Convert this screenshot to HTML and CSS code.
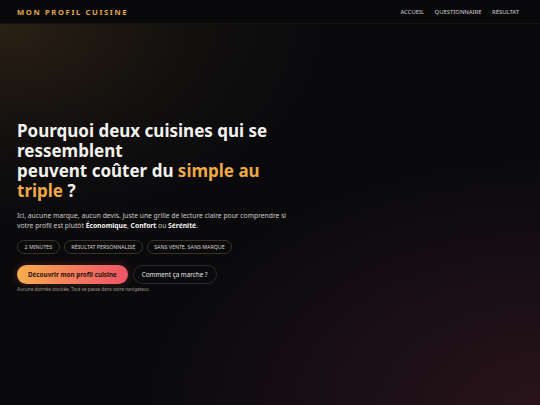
FILE: index.html
```html
<!DOCTYPE html>
<html lang="fr">
<head>
<meta charset="utf-8">
<title>Mon profil cuisine</title>
<link rel="stylesheet" href="styles.css">
</head>
<body>
<header class="topbar">
  <div class="brand">MON PROFIL CUISINE</div>
  <nav class="nav">
    <a href="#">ACCUEIL</a>
    <a href="#">QUESTIONNAIRE</a>
    <a href="#">RÉSULTAT</a>
  </nav>
</header>
<main class="hero">
  <div class="hero-inner">
    <h1 class="title">Pourquoi deux cuisines qui se ressemblent<br>peuvent coûter du <span class="accent">simple au triple</span> ?</h1>
    <p class="lead">Ici, aucune marque, aucun devis. Juste une grille de lecture claire pour comprendre si votre profil est plutôt <strong>Économique</strong>, <strong>Confort</strong> ou <strong>Sérénité</strong>.</p>
    <ul class="pills">
      <li class="pill">2 MINUTES</li>
      <li class="pill">RÉSULTAT PERSONNALISÉ</li>
      <li class="pill">SANS VENTE, SANS MARQUE</li>
    </ul>
    <div class="actions">
      <a class="btn btn-primary" href="#">Découvrir mon profil cuisine</a>
      <a class="btn btn-ghost" href="#">Comment ça marche ?</a>
    </div>
    <p class="note">Aucune donnée stockée. Tout se passe dans votre navigateur.</p>
  </div>
</main>
</body>
</html>
```
FILE: styles.css
```css
* { box-sizing: border-box; }
html, body { margin: 0; padding: 0; height: 100%; }
body {
  font-family: "Noto Sans", "Open Sans", sans-serif;
  background: #09090c;
  color: #f2f0ec;
  display: flex;
  flex-direction: column;
  min-height: 405px;
}
.topbar {
  height: 24px;
  flex: none;
  display: flex;
  align-items: center;
  justify-content: space-between;
  padding: 0 21px 0 17px;
  background: #08080b;
  border-bottom: 1px solid #15130f;
}
.brand {
  font-size: 7.6px;
  font-weight: 700;
  letter-spacing: 1.65px;
  color: #e2a94c;
}
.nav { display: flex; gap: 10.5px; }
.nav a {
  color: #d4d2d0;
  text-decoration: none;
  font-size: 5.9px;
}
.hero {
  flex: 1;
  display: flex;
  align-items: center;
  padding: 0 17px 16px;
  background:
    radial-gradient(ellipse 75% 65% at 0% 0%, rgba(48,36,22,0.85) 0%, rgba(30,24,16,0.45) 45%, rgba(0,0,0,0) 80%),
    radial-gradient(ellipse 85% 75% at 100% 100%, rgba(44,20,28,0.9) 0%, rgba(32,17,24,0.65) 45%, rgba(0,0,0,0) 85%),
    #0a0a0d;
}
.hero-inner { width: 290px; }
.title {
  margin: 0 0 10px;
  font-size: 17px;
  line-height: 20px;
  font-weight: 700;
  color: #f3f1ee;
  max-width: 262px;
}
.accent { color: #efa947; }
.lead {
  margin: 0 0 9px;
  font-size: 6.75px;
  line-height: 10px;
  color: #cfcbc6;
  max-width: 274px;
}
.lead strong { color: #f6f4f0; font-weight: 700; }
.pills {
  list-style: none;
  margin: 0 0 11px;
  padding: 0;
  display: flex;
  gap: 4px;
}
.pill {
  height: 14px;
  padding: 0 6.5px;
  display: flex;
  align-items: center;
  border: 1px solid #3d3324;
  border-radius: 7px;
  font-size: 5.3px;
  color: #d8d3cc;
}
.actions { display: flex; gap: 5px; align-items: center; }
.btn {
  height: 19px;
  display: flex;
  align-items: center;
  border-radius: 10px;
  text-decoration: none;
  font-size: 6.3px;
}
.btn-primary {
  padding: 0 11px;
  font-weight: 700;
  color: #2a1308;
  background: linear-gradient(90deg, #f9ad4d 0%, #f27560 60%, #ee5566 100%);
  box-shadow: 0 0 10px rgba(240,110,80,0.25);
}
.btn-ghost {
  padding: 0 8px;
  color: #e8e6e2;
  border: 1px solid #2c2a2a;
  background: rgba(10,10,12,0.6);
}
.note {
  margin: 2px 0 0;
  font-size: 4.6px;
  color: #9c9690;
}
```
